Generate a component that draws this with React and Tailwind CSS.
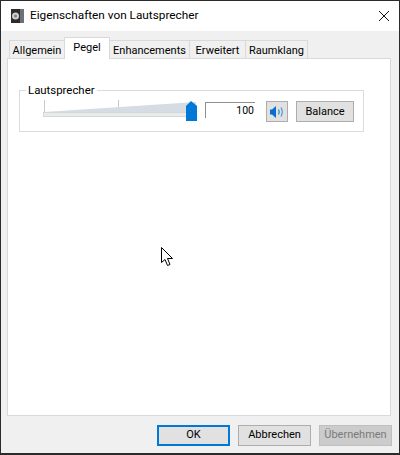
import React from "react";

const font = "font-['Roboto','Noto_Sans',sans-serif]";

const tabs = [
  { label: "Allgemein", width: "w-[56px]" },
  { label: "Pegel", width: "w-[46px]", active: true },
  { label: "Enhancements", width: "w-[81px]" },
  { label: "Erweitert", width: "w-[57px]" },
  { label: "Raumklang", width: "w-[63px]" },
];

const Tab = ({ label, width, active }) =>
  active ? (
    <div className={`${width} h-[22px] -ml-px -mb-px z-10 bg-white border border-b-0 border-[#d9d9d9] text-[11px] leading-[19px] text-center text-black`}>
      {label}
    </div>
  ) : (
    <div className={`${width} h-[18px] -ml-px bg-[#f0f0f0] border border-b-0 border-[#d9d9d9] text-[11px] leading-[19px] text-center text-black`}>
      {label}
    </div>
  );

const DialogButton = ({ children, variant }) => {
  const styles = {
    primary: "border-2 border-[#0078d7] bg-[#e1e1e1] text-black",
    normal: "border border-[#adadad] bg-[#e1e1e1] text-black",
    disabled: "border border-[#bfbfbf] bg-[#cccccc] text-[#7a7a7a]",
  };
  return (
    <div className={`w-[73px] h-[21px] flex items-center justify-center text-[11px] ${styles[variant]}`}>
      {children}
    </div>
  );
};

const Slider = () => (
  <svg width="154" height="22" viewBox="0 0 154 22" className="block">
    <rect x="1" y="0" width="1" height="12" fill="#c9c9c9" />
    <rect x="75" y="0" width="1" height="12" fill="#c9c9c9" />
    <polygon points="1,12 153,2 153,12" fill="#d5dce4" />
    <rect x="0.5" y="12.5" width="153" height="4" fill="#e9ecec" stroke="#d6d6d6" strokeWidth="1" />
    <polygon points="143,21 143,6 148,1 154,6 154,21" fill="#0078d7" />
  </svg>
);

const SpeakerIcon = () => (
  <svg width="16" height="16" viewBox="0 0 16 16">
    <polygon points="1,5.5 3,5.5 7,2 7,14 3,10.5 1,10.5" fill="#0a6ed1" />
    <path d="M9.5 5.5 Q11 8 9.5 10.5" fill="none" stroke="#1f7fd8" strokeWidth="1.2" />
    <path d="M12 3.5 Q14.5 8 12 12.5" fill="none" stroke="#4a98e0" strokeWidth="1.2" />
  </svg>
);

const CursorIcon = () => (
  <svg width="14" height="20" viewBox="0 0 14 20">
    <path d="M0.5 0.5 L0.5 15.5 L4 12.5 L6.5 18.5 L9 17.5 L6.5 11.5 L11.5 11.5 Z" fill="#fff" stroke="#000" strokeWidth="1" />
  </svg>
);

const SpeakerAppIcon = () => (
  <svg width="16" height="16" viewBox="0 0 16 16">
    <rect x="1" y="1" width="13" height="14" fill="#8a8a8a" />
    <rect x="10" y="1" width="4" height="14" fill="#6d7176" />
    <rect x="1" y="1" width="9" height="14" fill="#2b2b2b" />
    <circle cx="5.5" cy="8" r="3.5" fill="#cfcfcf" />
    <circle cx="5.5" cy="8" r="1.5" fill="#808080" />
  </svg>
);

export default function App() {
  return (
    <div className={`${font} relative w-[400px] h-[455px] bg-[#f0f0f0] border border-[#2b2b2b] border-b-2 flex flex-col overflow-hidden`}>
      {/* Title bar */}
      <div className="h-[30px] bg-white flex items-center shrink-0">
        <div className="ml-[9px] mr-[4px]">
          <SpeakerAppIcon />
        </div>
        <span className="text-[11.8px] text-black">Eigenschaften von Lautsprecher</span>
        <svg width="12" height="12" viewBox="0 0 12 12" className="ml-auto mr-[9px]">
          <path d="M1 1 L11 11 M11 1 L1 11" stroke="#111" strokeWidth="1" />
        </svg>
      </div>

      {/* Tabs */}
      <div className="pl-[9px] pt-[7px] flex items-end h-[27px] shrink-0">
        {tabs.map((tab) => (
          <Tab key={tab.label} {...tab} />
        ))}
      </div>

      {/* Tab panel */}
      <div className="ml-[6px] mr-[8px] h-[358px] bg-white border border-[#d9d9d9] pt-[31px] px-[11px] shrink-0">
        <div className="relative w-[345px] h-[42px] border border-[#dcdcdc] flex items-start pt-[10px]">
          <span className="absolute -top-[8px] left-[6px] bg-white px-[2px] text-[11.4px] leading-[15px] text-black">Lautsprecher</span>
          <div className="ml-[23px] -mt-[1px]">
            <Slider />
          </div>
          <div className="ml-[8px] mt-[1px] w-[50px] h-[16px] border-l border-t border-[#8e8e8e] text-right pr-[1px] text-[10.5px] leading-[16px] text-black">
            100
          </div>
          <div className="ml-[11px] w-[22px] h-[21px] bg-[#e1e1e1] border border-[#adadad] flex items-center justify-center">
            <SpeakerIcon />
          </div>
          <div className="ml-[8px] w-[58px] h-[21px] pt-[1px] bg-[#e1e1e1] border border-[#adadad] flex items-center justify-center text-[11px] text-black">
            Balance
          </div>
        </div>
      </div>

      {/* Footer buttons */}
      <div className="flex justify-end gap-[8px] pt-[9px] pr-[7px]">
        <DialogButton variant="primary">OK</DialogButton>
        <DialogButton variant="normal">Abbrechen</DialogButton>
        <DialogButton variant="disabled">Übernehmen</DialogButton>
      </div>

      {/* Mouse pointer */}
      <div className="absolute left-[160px] top-[246px]">
        <CursorIcon />
      </div>
    </div>
  );
}
